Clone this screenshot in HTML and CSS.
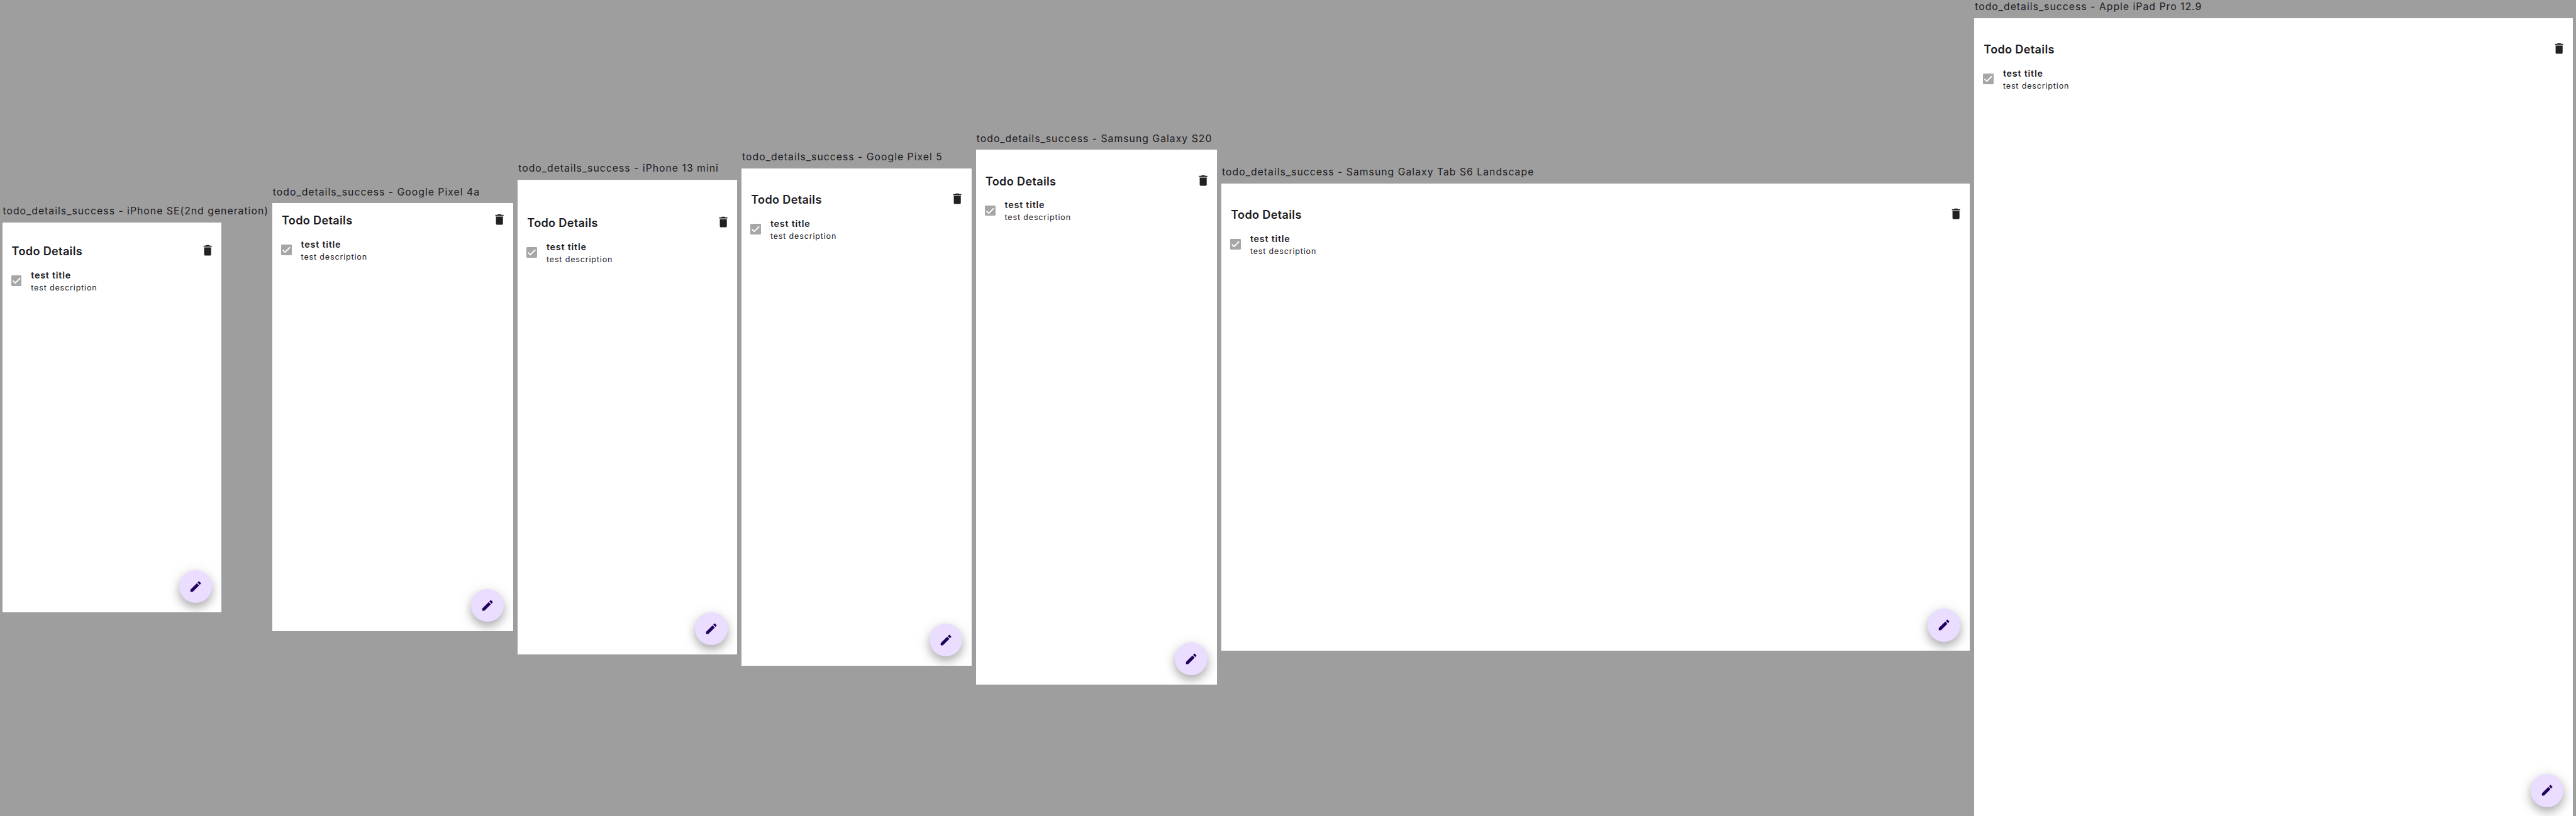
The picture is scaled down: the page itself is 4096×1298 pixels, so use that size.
FILE: index.html
```html
<!DOCTYPE html>
<html lang="en">
<head>
<meta charset="utf-8">
<title>todo_details_success</title>
<link rel="stylesheet" href="styles.css">
</head>
<body>
<svg class="sprite" aria-hidden="true">
  <symbol id="delete" viewBox="0 0 24 24"><path d="M6 19c0 1.1.9 2 2 2h8c1.1 0 2-.9 2-2V7H6v12zM19 4h-3.5l-1-1h-5l-1 1H5v2h14V4z"/></symbol>
  <symbol id="edit" viewBox="0 0 24 24"><path d="M3 17.25V21h3.750L17.810 9.940l-3.750-3.750L3 17.250zM20.710 7.040c.390-.390.390-1.020 0-1.410l-2.340-2.340c-.390-.390-1.020-.390-1.410 0l-1.830 1.830 3.750 3.750 1.830-1.830z"/></symbol>
  <symbol id="check" viewBox="0 0 18 18"><path d="M2.700 9.200l4 4L15.300 4.600" fill="none" stroke="#fff" stroke-width="2"/></symbol>
</svg>
<main class="devices">
  <section class="device se">
    <h2 class="label">todo_details_success - iPhone SE(2nd generation)</h2>
    <div class="screen">
      <header class="bar"><h1 class="heading">Todo Details</h1><svg class="icon"><use href="#delete"/></svg></header>
      <div class="todo"><span class="box"><svg class="tick"><use href="#check"/></svg></span><div><p class="name">test title</p><p class="desc">test description</p></div></div>
      <button class="fab"><svg class="icon"><use href="#edit"/></svg></button>
    </div>
  </section>
  <section class="device pixel4a">
    <h2 class="label">todo_details_success - Google Pixel 4a</h2>
    <div class="screen">
      <header class="bar"><h1 class="heading">Todo Details</h1><svg class="icon"><use href="#delete"/></svg></header>
      <div class="todo"><span class="box"><svg class="tick"><use href="#check"/></svg></span><div><p class="name">test title</p><p class="desc">test description</p></div></div>
      <button class="fab"><svg class="icon"><use href="#edit"/></svg></button>
    </div>
  </section>
  <section class="device mini">
    <h2 class="label">todo_details_success - iPhone 13 mini</h2>
    <div class="screen">
      <header class="bar"><h1 class="heading">Todo Details</h1><svg class="icon"><use href="#delete"/></svg></header>
      <div class="todo"><span class="box"><svg class="tick"><use href="#check"/></svg></span><div><p class="name">test title</p><p class="desc">test description</p></div></div>
      <button class="fab"><svg class="icon"><use href="#edit"/></svg></button>
    </div>
  </section>
  <section class="device pixel5">
    <h2 class="label">todo_details_success - Google Pixel 5</h2>
    <div class="screen">
      <header class="bar"><h1 class="heading">Todo Details</h1><svg class="icon"><use href="#delete"/></svg></header>
      <div class="todo"><span class="box"><svg class="tick"><use href="#check"/></svg></span><div><p class="name">test title</p><p class="desc">test description</p></div></div>
      <button class="fab"><svg class="icon"><use href="#edit"/></svg></button>
    </div>
  </section>
  <section class="device s20">
    <h2 class="label">todo_details_success - Samsung Galaxy S20</h2>
    <div class="screen">
      <header class="bar"><h1 class="heading">Todo Details</h1><svg class="icon"><use href="#delete"/></svg></header>
      <div class="todo"><span class="box"><svg class="tick"><use href="#check"/></svg></span><div><p class="name">test title</p><p class="desc">test description</p></div></div>
      <button class="fab"><svg class="icon"><use href="#edit"/></svg></button>
    </div>
  </section>
  <section class="device tab">
    <h2 class="label">todo_details_success - Samsung Galaxy Tab S6 Landscape</h2>
    <div class="screen">
      <header class="bar"><h1 class="heading">Todo Details</h1><svg class="icon"><use href="#delete"/></svg></header>
      <div class="todo"><span class="box"><svg class="tick"><use href="#check"/></svg></span><div><p class="name">test title</p><p class="desc">test description</p></div></div>
      <button class="fab"><svg class="icon"><use href="#edit"/></svg></button>
    </div>
  </section>
  <section class="device ipad">
    <h2 class="label">todo_details_success - Apple iPad Pro 12.9</h2>
    <div class="screen">
      <header class="bar"><h1 class="heading">Todo Details</h1><svg class="icon"><use href="#delete"/></svg></header>
      <div class="todo"><span class="box"><svg class="tick"><use href="#check"/></svg></span><div><p class="name">test title</p><p class="desc">test description</p></div></div>
      <button class="fab"><svg class="icon"><use href="#edit"/></svg></button>
    </div>
  </section>
</main>
</body>
</html>
```
FILE: styles.css
```css
/* 1rem is ten device-independent pixels at the sheet's scale */
html { font-size: 9.2943px; }
* { box-sizing: border-box; margin: 0; padding: 0; }
body {
  height: 100vh;
  overflow: hidden;
  background: #9e9e9e;
  color: #1c1b1f;
  font-family: Inter, "Liberation Sans", sans-serif;
}
.sprite { display: none; }
.devices { display: flex; align-items: center; height: 139.7rem; width: 440.6rem; }
.device { flex: none; padding: 0 .4rem; }
.label {
  height: 3.1rem;
  padding: .1rem 0 0 .08rem;
  font-size: 1.7rem;
  line-height: 2.1rem;
  font-weight: 400;
  letter-spacing: .107rem;
  white-space: nowrap;
}
.screen {
  display: flex;
  flex-direction: column;
  width: var(--w);
  height: var(--h);
  padding-top: var(--safe);
  background: #fff;
  overflow: hidden;
}
.se { --w: 37.5rem; --h: 66.7rem; --safe: 2rem; width: 46.2rem; }
.pixel4a { --w: 41.2rem; --h: 73.2rem; --safe: 0rem; }
.mini { --w: 37.5rem; --h: 81.2rem; --safe: 4.4rem; }
.pixel5 { --w: 39.3rem; --h: 85.1rem; --safe: 2.4rem; }
.s20 { --w: 41.2rem; --h: 91.5rem; --safe: 2.4rem; }
.tab { --w: 128rem; --h: 80rem; --safe: 2.4rem; }
.ipad { --w: 102.4rem; --h: 136.6rem; --safe: 2.4rem; }
.bar {
  display: flex;
  align-items: center;
  justify-content: space-between;
  height: 5.6rem;
  padding: 0 1.2rem 0 1.6rem;
}
.heading { font-size: 1.95rem; line-height: 2.8rem; font-weight: 600; letter-spacing: .035rem; padding-top: .2rem; }
.icon { display: block; width: 2.4rem; height: 2.4rem; fill: #212121; }
.todo { display: flex; padding: .5rem 1.5rem 0; }
.box { width: 1.8rem; height: 1.8rem; margin: 1rem 1.6rem 0 0; border-radius: .15rem; background: #a6a6a8; }
.tick { display: block; width: 100%; height: 100%; }
.name { font-size: 1.55rem; line-height: 2rem; font-weight: 600; letter-spacing: .08rem; }
.desc { padding-top: .13rem; font-size: 1.35rem; line-height: 2rem; letter-spacing: .09rem; }
.fab {
  display: grid;
  place-items: center;
  width: 5.6rem;
  height: 5.6rem;
  margin: auto 1.6rem 1.6rem auto;
  border: 0;
  border-radius: 50%;
  background: #eaddff;
  box-shadow: 0 .8rem 1.4rem rgba(0,0,0,.2), 0 .6rem 2.4rem rgba(0,0,0,.18);
}
.fab .icon { fill: #21005d; }
```
